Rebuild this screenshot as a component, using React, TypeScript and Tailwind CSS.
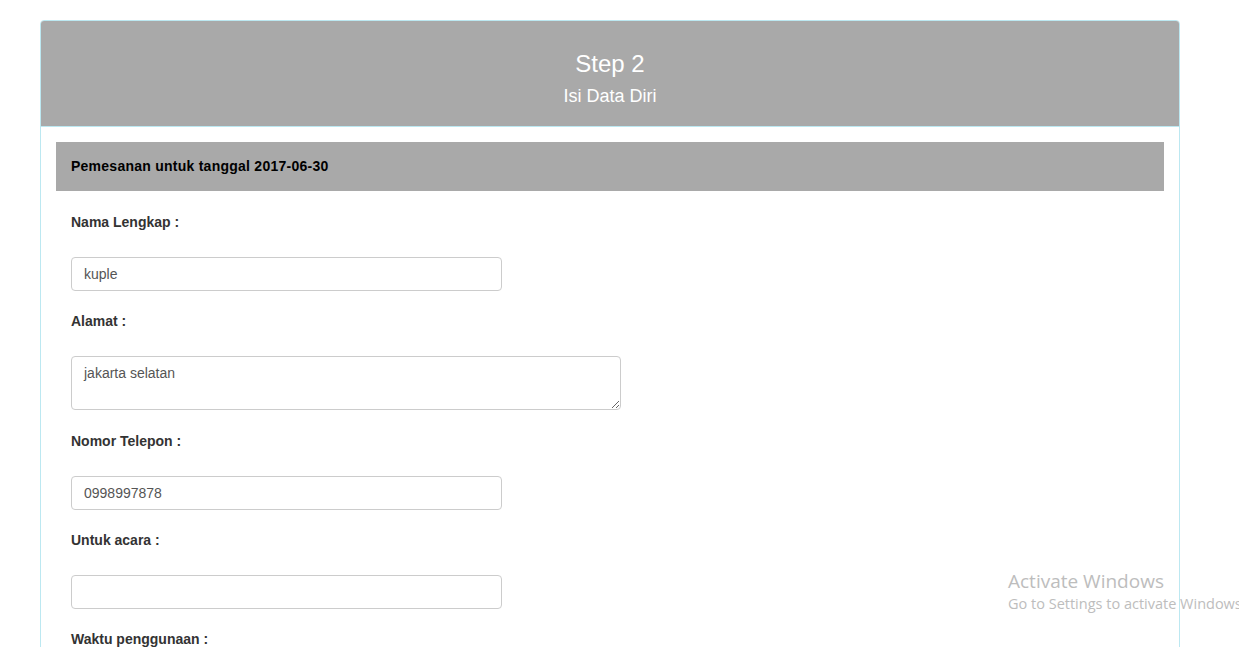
export default function App() {
  const font = { fontFamily: '"Liberation Sans", Arial, sans-serif' };
  const fields = [
    { label: "Nama Lengkap :", value: "kuple", kind: "input" },
    { label: "Alamat :", value: "jakarta selatan", kind: "textarea" },
    { label: "Nomor Telepon :", value: "0998997878", kind: "input" },
    { label: "Untuk acara :", value: "", kind: "input" },
  ];

  return (
    <div className="relative min-h-[647px] overflow-hidden bg-white text-[14px] text-[#333]" style={font}>
      <div className="ml-[40px] mr-[59px] pt-[20px]">
        <div className="rounded-t-[4px] border border-[#bce8f1]">
          <div className="flex h-[106px] flex-col items-center justify-center rounded-t-[3px] border-b border-[#bce8f1] bg-[#a9a9a9] text-white">
            <div className="mt-[10px] text-[24px] leading-[28px]">Step 2</div>
            <div className="mt-[7px] text-[18px] leading-[22px]">Isi Data Diri</div>
          </div>
          <div className="p-[15px]">
            <div className="flex h-[49px] items-center bg-[#a9a9a9] px-[15px] text-[14px] font-bold tracking-[0.25px] text-black">
              Pemesanan untuk tanggal 2017-06-30
            </div>
            <div className="px-[15px] pt-[21px]">
              {fields.map((f) => (
                <div key={f.label} className={f.kind === "textarea" ? "mb-[21px]" : "mb-[20px]"}>
                  <div className="h-[20px] text-[14px] font-bold leading-[20px]">{f.label}</div>
                  {f.kind === "textarea" ? (
                    <textarea
                      readOnly
                      value={f.value}
                      className="mt-[25px] block h-[54px] w-[550px] rounded-[4px] border border-[#ccc] px-[12px] py-[6px] text-[14px] leading-[20px] text-[#555] outline-none"
                      style={font}
                    />
                  ) : (
                    <input
                      readOnly
                      value={f.value}
                      className="mt-[25px] block h-[34px] w-[431px] rounded-[4px] border border-[#ccc] px-[12px] text-[14px] text-[#555] outline-none"
                      style={font}
                    />
                  )}
                </div>
              ))}
              <div className="h-[20px] text-[14px] font-bold leading-[20px]">Waktu penggunaan :</div>
            </div>
          </div>
        </div>
      </div>

      <div className="pointer-events-none absolute left-[1008px] top-[568px] whitespace-nowrap text-[#bdbdbd]" style={{ fontFamily: '"Open Sans", "Noto Sans", sans-serif' }}>
        <div className="text-[19px] leading-[26px]">Activate Windows</div>
        <div className="text-[14.5px] leading-[20px]">Go to Settings to activate Windows.</div>
      </div>
    </div>
  );
}
